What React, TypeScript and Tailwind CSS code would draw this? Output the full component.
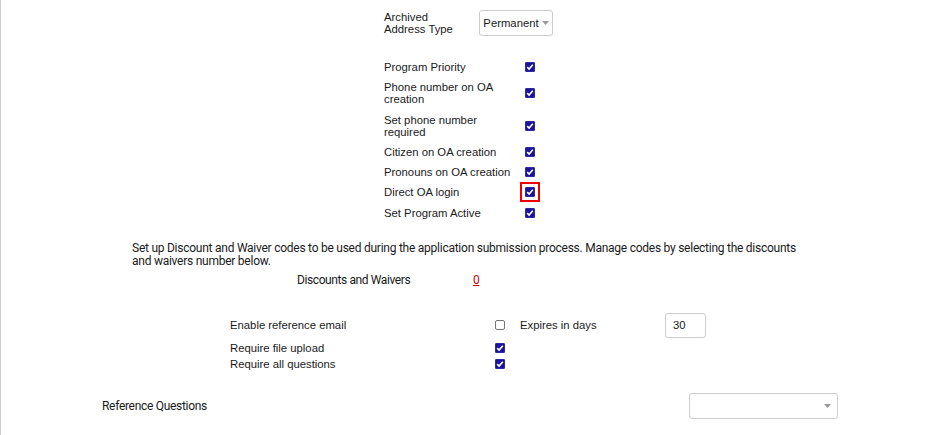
import React from "react";

function Check({ checked = true }: { checked?: boolean }) {
    if (!checked) {
        return <span className="block w-[10px] h-[10px] rounded-[2px] border border-[#767676] bg-white" />;
    }
    return (
        <span className="flex w-[10px] h-[10px] items-center justify-center rounded-[1px] bg-[#1b1496] border border-[#2f29a8]">
            <svg width="8" height="8" viewBox="0 0 8 8">
                <path d="M1.2 4.2 L3.1 6 L6.8 1.8" fill="none" stroke="#fff" strokeWidth="1.6" />
            </svg>
        </span>
    );
}

function Caret() {
    return (
        <svg width="7" height="4" viewBox="0 0 7 4">
            <path d="M0 0 L7 0 L3.5 4 Z" fill="#999" />
        </svg>
    );
}

const programRows: { label: string; outlined?: boolean }[] = [
    { label: "Program Priority" },
    { label: "Phone number on OA creation" },
    { label: "Set phone number required" },
    { label: "Citizen on OA creation" },
    { label: "Pronouns on OA creation" },
    { label: "Direct OA login", outlined: true },
    { label: "Set Program Active" },
];

export default function App() {
    return (
        <div className="h-[435px] overflow-hidden bg-white border-l border-[#cccccc] text-[11.3px] text-[#1a1a1a] font-['Liberation_Sans',Arial,sans-serif]">
            <div className="pl-[383px] pt-[10px]">
                <div className="flex items-center">
                    <div className="w-[95px] leading-[12px]">
                        Archived
                        <br />
                        Address Type
                    </div>
                    <button className="flex h-[26px] w-[74px] items-center justify-center gap-[3px] rounded-[3px] border border-[#cccccc] bg-white text-[11.3px] text-[#1a1a1a]">
                        Permanent
                        <Caret />
                    </button>
                </div>

                <div className="mt-[25px] flex flex-col gap-[8.3px]">
                    {programRows.map((row) => (
                        <div key={row.label} className="flex items-center">
                            <div className="w-[130px] mr-[11px] leading-[12px]">{row.label}</div>
                            <span className={row.outlined ? "block outline-2 outline-[#ee0000] outline-offset-[3px]" : "block"}>
                                <Check />
                            </span>
                        </div>
                    ))}
                </div>
            </div>

            <div className="mt-[23px] pl-[131px] w-[810px] font-['Roboto',sans-serif] text-[12px] leading-[13px] text-[#1a1a1a] tracking-[-0.25px]">
                Set up Discount and Waiver codes to be used during the application submission process. Manage codes by selecting the discounts and waivers number below.
            </div>

            <div className="mt-[6px] pl-[296px] flex items-center leading-[13px] font-['Roboto',sans-serif] text-[12px] tracking-[-0.4px]">
                <div className="w-[176px]">Discounts and Waivers</div>
                <a className="text-[#cc0000] underline">0</a>
            </div>

            <div className="mt-[26px] pl-[229px]">
                <div className="flex h-[25px] items-center">
                    <div className="w-[265px]">Enable reference email</div>
                    <Check checked={false} />
                    <div className="ml-[15px] w-[145px]">Expires in days</div>
                    <div className="flex h-[25px] w-[41px] items-center rounded-[3px] border border-[#cccccc] pl-[7px]">30</div>
                </div>
                <div className="mt-[4.5px] flex items-center leading-[12px]">
                    <div className="w-[265px]">Require file upload</div>
                    <Check />
                </div>
                <div className="mt-[4px] flex items-center leading-[12px]">
                    <div className="w-[265px]">Require all questions</div>
                    <Check />
                </div>
            </div>

            <div className="mt-[23px] pl-[101px] flex items-center">
                <div className="w-[587px] font-['Roboto',sans-serif] text-[12px] tracking-[-0.3px]">Reference Questions</div>
                <div className="flex h-[26px] w-[149px] items-center justify-end rounded-[3px] border border-[#cccccc] pr-[6px]">
                    <Caret />
                </div>
            </div>
        </div>
    );
}
